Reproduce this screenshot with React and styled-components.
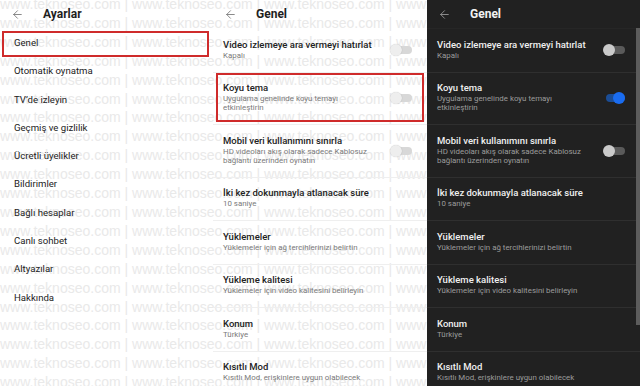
import styled, { createGlobalStyle } from 'styled-components'
import { ArrowLeft } from 'lucide-react'

const GlobalStyle = createGlobalStyle`
  html, body {
    margin: 0;
    padding: 0;
    background: #fff;
  }
  body {
    width: 640px;
    height: 386px;
    overflow: hidden;
    font-family: Roboto, "Noto Sans", sans-serif;
  }
`

const menu = [
    'Genel',
    'Otomatik oynatma',
    'TV’de izleyin',
    'Geçmiş ve gizlilik',
    'Ücretli üyelikler',
    'Bildirimler',
    'Bağlı hesaplar',
    'Canlı sohbet',
    'Altyazılar',
    'Hakkında',
]

const settings = [
    { title: 'Video izlemeye ara vermeyi hatırlat', sub: ['Kapalı'], toggle: true },
    { title: 'Koyu tema', sub: ['Uygulama genelinde koyu temayı', 'etkinleştirin'], toggle: true, theme: true },
    { title: 'Mobil veri kullanımını sınırla', sub: ['HD videoları akış olarak sadece Kablosuz', 'bağlantı üzerinden oynatın'], toggle: true },
    { title: 'İki kez dokunmayla atlanacak süre', sub: ['10 saniye'] },
    { title: 'Yüklemeler', sub: ['Yüklemeler için ağ tercihlerinizi belirtin'] },
    { title: 'Yükleme kalitesi', sub: ['Yüklemeler için video kalitesini belirleyin'] },
    { title: 'Konum', sub: ['Türkiye'] },
    { title: 'Kısıtlı Mod', sub: ['Kısıtlı Mod, erişkinlere uygun olabilecek'] },
]

const Toggle = ({ dark, on }) => (
    <Switch>
        <Track $dark={dark} $on={on} />
        <Knob $dark={dark} $on={on} />
    </Switch>
)

const GenelPanel = ({ dark }) => (
    <Panel $dark={dark}>
        <Header $dark={dark}>
            <BackIcon $dark={dark}>
                <ArrowLeft size={13} strokeWidth={1.6} />
            </BackIcon>
            <Title $dark={dark}>Genel</Title>
        </Header>
        {settings.map((s) => (
            <Row key={s.title} $dark={dark} $marked={!dark && s.theme}>
                <RowText>
                    <RowTitle $dark={dark}>{s.title}</RowTitle>
                    {s.sub.map((line) => (
                        <RowSub key={line} $dark={dark}>{line}</RowSub>
                    ))}
                </RowText>
                {s.toggle && <Toggle dark={dark} on={dark && s.theme} />}
            </Row>
        ))}
        {dark && <ScrollBar />}
    </Panel>
)

const App = () => {
    const rows = Array.from({ length: 22 })
    return (
        <>
            <GlobalStyle />
            <Screen>
                <Watermark>
                    {rows.map((_, i) => (
                        <MarkLine key={i}>
                            www.teknoseo.com | www.teknoseo.com | www.teknoseo.com | www.teknoseo.com |
                        </MarkLine>
                    ))}
                </Watermark>
                <Panel>
                    <Header>
                        <BackIcon>
                            <ArrowLeft size={13} strokeWidth={1.6} />
                        </BackIcon>
                        <Title>Ayarlar</Title>
                    </Header>
                    {menu.map((m) => (
                        <MenuItem key={m} $marked={m === 'Genel'}>{m}</MenuItem>
                    ))}
                </Panel>
                <GenelPanel />
                <GenelPanel dark />
            </Screen>
        </>
    )
}

export default App

const Screen = styled.div`
position: relative;
width: 640px;
height: 386px;
overflow: hidden;
display: grid;
grid-template-columns: 213px 214px 213px;
`

const Watermark = styled.div`
position: absolute;
left: 0;
top: -5px;
width: 427px;
height: 400px;
overflow: hidden;
z-index: 0;
pointer-events: none;
font-family: "Liberation Sans", Arial, sans-serif;
font-size: 14px;
line-height: 18.9px;
color: #e9e9e9;
`

const MarkLine = styled.div`
white-space: nowrap;
`

const Panel = styled.div`
position: relative;
z-index: 1;
height: 386px;
overflow: hidden;
background: ${(p) => (p.$dark ? '#212121' : 'transparent')};
`

const Header = styled.div`
display: flex;
align-items: center;
height: 28px;
border-bottom: 1px solid ${(p) => (p.$dark ? '#262626' : 'transparent')};
`

const BackIcon = styled.div`
display: flex;
align-items: center;
justify-content: center;
width: 34px;
color: ${(p) => (p.$dark ? '#9a9a9a' : '#777')};
`

const Title = styled.div`
margin-left: 9px;
font-size: 12px;
font-weight: 700;
color: ${(p) => (p.$dark ? '#f2f2f2' : '#1f1f1f')};
`

const MenuItem = styled.div`
position: relative;
height: 28.3px;
line-height: 28.3px;
padding-left: 14px;
font-size: 9.6px;
color: #222;

&::after {
    content: '';
    display: ${(p) => (p.$marked ? 'block' : 'none')};
    position: absolute;
    top: 2px;
    bottom: 0;
    left: 2px;
    right: 4px;
    border: 2px solid #cf2b2b;
}
`

const Row = styled.div`
position: relative;
display: flex;
align-items: center;
padding: 8.5px 15px 12px 10px;
border-bottom: 1px solid ${(p) => (p.$dark ? '#2f2f2f' : '#efefef')};

&::after {
    content: '';
    display: ${(p) => (p.$marked ? 'block' : 'none')};
    position: absolute;
    top: 0;
    bottom: 2px;
    left: 3px;
    right: 3px;
    border: 2px solid #cf2b2b;
}
`

const RowText = styled.div`
flex: 1;
min-width: 0;
`

const RowTitle = styled.div`
font-size: 9.5px;
line-height: 13px;
font-weight: 500;
white-space: nowrap;
color: ${(p) => (p.$dark ? '#f0f0f0' : '#222')};
`

const RowSub = styled.div`
font-size: 7.9px;
line-height: 9px;
white-space: nowrap;
color: ${(p) => (p.$dark ? '#9c9c9c' : '#7a7a7a')};
`

const Switch = styled.div`
position: relative;
width: 22px;
height: 12px;
flex-shrink: 0;
margin-top: 3px;
`

const Track = styled.div`
position: absolute;
left: 3px;
right: 0;
top: 2px;
height: 8px;
border-radius: 4px;
background: ${(p) => (p.$on ? '#1b4d96' : p.$dark ? '#5a5a5a' : '#d8d8d8')};
`

const Knob = styled.div`
position: absolute;
top: 0;
left: ${(p) => (p.$on ? '10px' : '0')};
width: 12px;
height: 12px;
border-radius: 50%;
background: ${(p) => (p.$on ? '#1a6cf0' : p.$dark ? '#cacaca' : '#eeeeee')};
box-shadow: ${(p) => (p.$dark ? 'none' : '0 0 1px rgba(0,0,0,0.25)')};
`

const ScrollBar = styled.div`
position: absolute;
right: 0;
top: 28px;
width: 4px;
height: 297px;
background: #5c5c5c;
`
